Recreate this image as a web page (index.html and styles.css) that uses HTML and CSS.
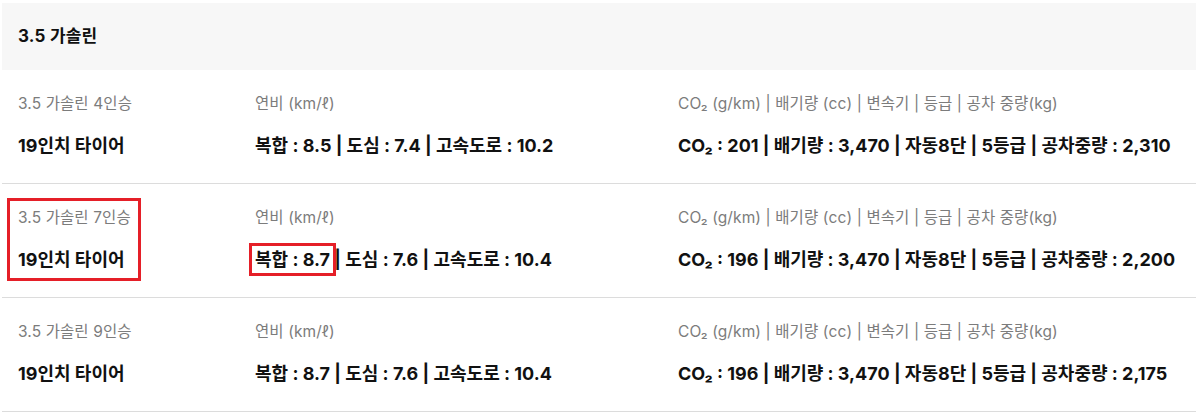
FILE: index.html
```html
<!DOCTYPE html>
<html lang="ko">

<head>
  <meta charset="UTF-8">
  <title>3.5 가솔린 제원</title>
  <link rel="stylesheet" href="styles.css">
</head>

<body>
  <div class="spec">
    <div class="spec-head">3.5 가솔린</div>

    <div class="spec-row">
      <div class="cell c1">
        <p class="label">3.5 가솔린 4인승</p>
        <p class="value">19인치 타이어</p>
      </div>
      <div class="cell c2">
        <p class="label">연비 (km/ℓ)</p>
        <p class="value">복합 : 8.5 | 도심 : 7.4 | 고속도로 : 10.2</p>
      </div>
      <div class="cell c3">
        <p class="label">CO₂ (g/km) | 배기량 (cc) | 변속기 | 등급 | 공차 중량(kg)</p>
        <p class="value">CO₂ : 201 | 배기량 : 3,470 | 자동8단 | 5등급 | 공차중량 : 2,310</p>
      </div>
    </div>

    <div class="spec-row">
      <div class="cell c1">
        <div class="mark mark-cell">
          <p class="label">3.5 가솔린 7인승</p>
          <p class="value">19인치 타이어</p>
        </div>
      </div>
      <div class="cell c2">
        <p class="label">연비 (km/ℓ)</p>
        <p class="value"><span class="mark mark-text">복합 : 8.7</span> | 도심 : 7.6 | 고속도로 : 10.4</p>
      </div>
      <div class="cell c3">
        <p class="label">CO₂ (g/km) | 배기량 (cc) | 변속기 | 등급 | 공차 중량(kg)</p>
        <p class="value">CO₂ : 196 | 배기량 : 3,470 | 자동8단 | 5등급 | 공차중량 : 2,200</p>
      </div>
    </div>

    <div class="spec-row">
      <div class="cell c1">
        <p class="label">3.5 가솔린 9인승</p>
        <p class="value">19인치 타이어</p>
      </div>
      <div class="cell c2">
        <p class="label">연비 (km/ℓ)</p>
        <p class="value">복합 : 8.7 | 도심 : 7.6 | 고속도로 : 10.4</p>
      </div>
      <div class="cell c3">
        <p class="label">CO₂ (g/km) | 배기량 (cc) | 변속기 | 등급 | 공차 중량(kg)</p>
        <p class="value">CO₂ : 196 | 배기량 : 3,470 | 자동8단 | 5등급 | 공차중량 : 2,175</p>
      </div>
    </div>
  </div>
</body>

</html>
```

FILE: styles.css
```css
* {
  margin: 0px;
  padding: 0px;
  box-sizing: border-box;
}

body {
  background-color: white;
  font-family: Inter, "Noto Sans CJK KR", sans-serif;
  color: #111;
}

.spec {
  padding: 3px 0px 0px 2px;
}

.spec-head {
  height: 67px;
  background-color: #f7f7f7;
  padding-left: 16px;
  font-size: 17px;
  font-weight: 700;
  line-height: 67px;
  letter-spacing: 0.2px;
}

.spec-row {
  display: flex;
  height: 114px;
  padding: 23px 0px 0px 16px;
  border-bottom: 1px solid #dcdcdc;
}

.cell {
  flex: none;
}

.c1 {
  width: 237px;
}

.c2 {
  width: 423px;
}

.label {
  font-size: 15.5px;
  color: #7c7c7c;
  line-height: 22px;
  letter-spacing: 0.1px;
}

.value {
  margin-top: 20px;
  font-size: 18px;
  font-weight: 700;
  line-height: 22px;
}

/* red highlight boxes */
.mark {
  position: relative;
}

.mark::after {
  content: "";
  position: absolute;
  border: 3px solid #e51f28;
}

.mark-cell {
  display: inline-block;
}

.mark-cell::after {
  top: -9px;
  left: -11px;
  right: -10px;
  bottom: -10px;
}

.mark-text {
  display: inline-block;
}

.mark-text::after {
  top: -6px;
  left: -6px;
  right: -6px;
  bottom: -5px;
}
```
